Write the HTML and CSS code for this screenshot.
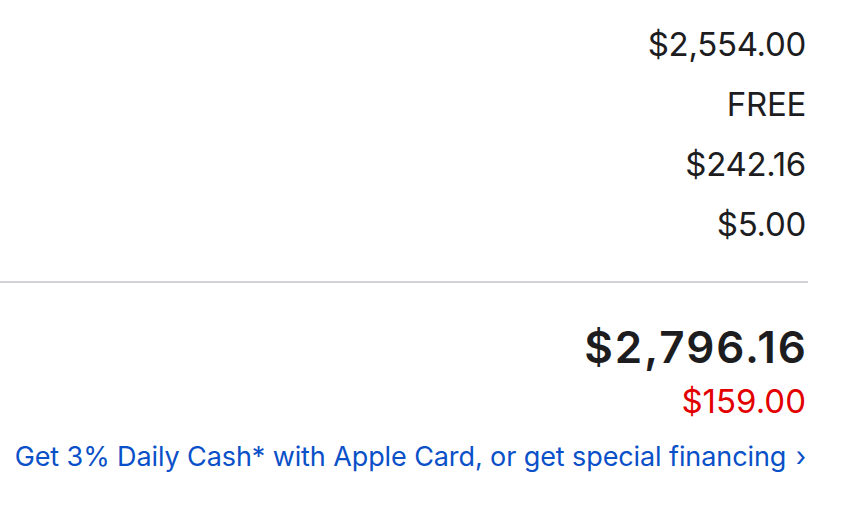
FILE: index.html
```html
<!DOCTYPE html>
<html>
<head>
<meta charset="utf-8">
<link rel="stylesheet" href="styles.css">
</head>
<body>
<div class="summary">
  <div class="rows">
    <div class="row">$2,554.00</div>
    <div class="row">FREE</div>
    <div class="row">$242.16</div>
    <div class="row">$5.00</div>
  </div>
  <div class="divider"></div>
  <div class="totals">
    <div class="total">$2,796.16</div>
    <div class="monthly">$159.00</div>
    <a class="link" href="#">Get 3% Daily Cash* with Apple Card, or get special financing <span class="chev">›</span></a>
  </div>
</div>
</body>
</html>
```
FILE: styles.css
```css
html, body {
  margin: 0;
  padding: 0;
  background: #fff;
}
body {
  font-family: Inter, "Noto Sans", sans-serif;
  color: #1d1d1f;
  width: 858px;
  height: 508px;
  overflow: hidden;
}
.summary {
  width: 808px;
  display: flex;
  flex-direction: column;
}
.rows {
  padding-top: 14px;
  padding-right: 2px;
  display: flex;
  flex-direction: column;
  align-items: flex-end;
}
.row {
  font-size: 33px;
  line-height: 60px;
  letter-spacing: -0.3px;
}
.divider {
  height: 2px;
  background: #d2d2d7;
  margin-top: 27px;
}
.totals {
  padding-right: 2px;
  display: flex;
  flex-direction: column;
  align-items: flex-end;
}
.total {
  margin-top: 40px;
  font-size: 44px;
  font-weight: 600;
  line-height: 48px;
  letter-spacing: 2px;
  margin-right: -2px;
}
.monthly {
  margin-top: 10px;
  color: #e30000;
  font-size: 33px;
  line-height: 40px;
  letter-spacing: 0;
}
.link {
  margin-top: 19px;
  color: #0a50c8;
  text-decoration: none;
  font-size: 27px;
  line-height: 34px;
  letter-spacing: -0.1px;
}
.chev {
  display: inline-block;
  margin-left: 2px;
}
```
